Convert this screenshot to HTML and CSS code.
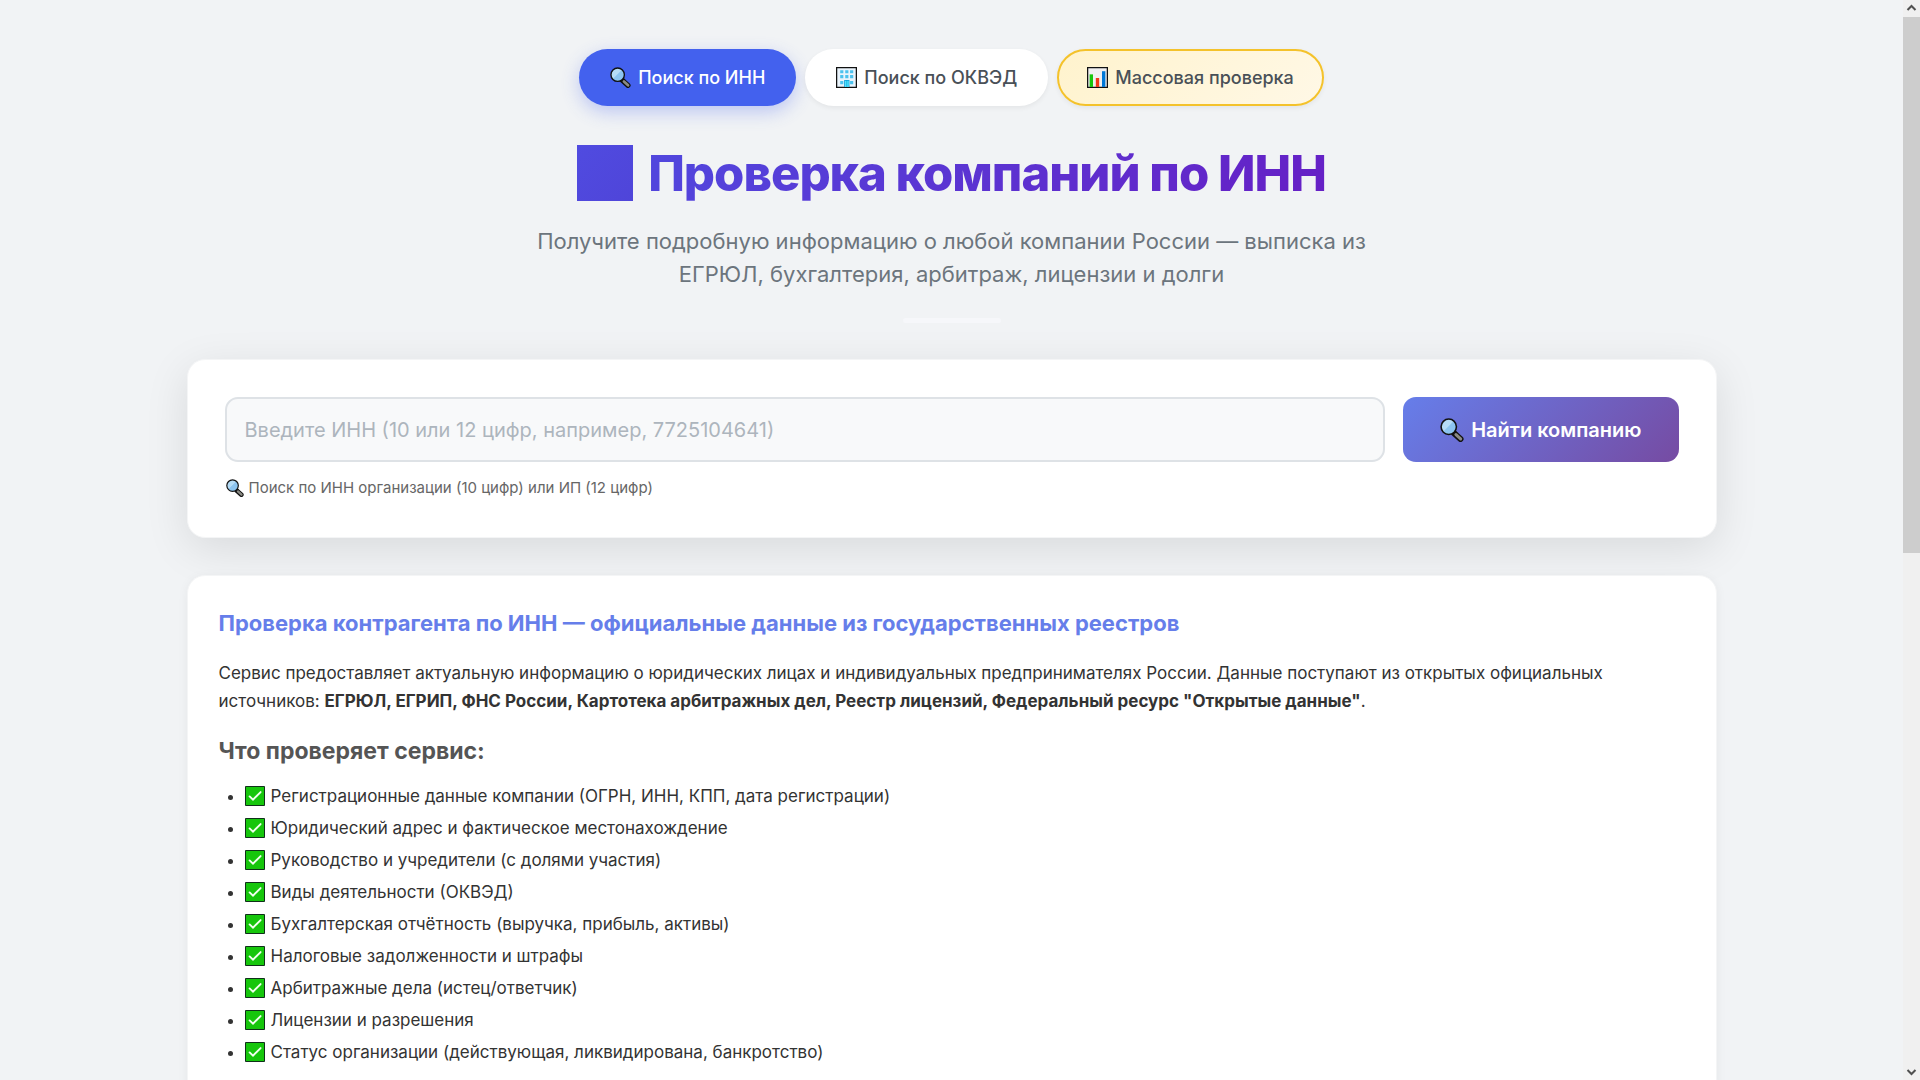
FILE: index.html
```html
<!DOCTYPE html>
<html lang="ru">
  <head>
    <meta charset="UTF-8" />
    <meta name="viewport" content="width=device-width, initial-scale=1" />
    <title>Проверка компаний по ИНН</title>
    <link rel="stylesheet" href="styles.css">
  </head>
  <body>
    <!-- общие иконки -->
    <svg class="sprite" aria-hidden="true">
      <linearGradient id="glass" x1="0" y1="0" x2="1" y2="1">
        <stop offset="0.45" stop-color="#b5dcf7" />
        <stop offset="0.5" stop-color="#8cc4f0" />
      </linearGradient>
      <symbol id="i-search" viewBox="0 0 20 20">
        <path d="M11.5 12.5l5.6 5" stroke="#111" stroke-width="5" stroke-linecap="round" />
        <path d="M11 11l2.6 2.6" stroke="#111" stroke-width="3.4" />
        <path d="M13.3 13.8l3.9 3.6" stroke="#8a8a84" stroke-width="2.6" stroke-linecap="round" />
        <circle cx="7.3" cy="7.3" r="6.4" fill="url(#glass)" stroke="#111" stroke-width="1.3" />
      </symbol>
      <symbol id="i-check" viewBox="0 0 20 20">
        <path d="M.5 .5h19v19H.5z" fill="#16c60c" stroke="#10301a" />
        <path d="M4.6 10.4l3.4 3.3 7.6-7.6" fill="none" stroke="#f2fff0" stroke-width="1.9" stroke-linecap="round" />
      </symbol>
    </svg>

    <div class="window">
      <div class="page">
        <div class="container">
          <!-- вкладки -->
          <nav class="tabs">
            <a class="tab active" href="#"><svg class="icon"><use href="#i-search" /></svg>Поиск по ИНН</a>
            <a class="tab" href="#">
              <svg class="icon" viewBox="0 0 20 20">
                <path d="M.6 .6h18.8v18.8H.6z" fill="#eaf4fc" stroke="#111" stroke-width="1.2" />
                <path d="M4 3h3v3H4zM8.8 3h3v3h-3zM13.4 3h3v3h-3zM4 7.6h3v3H4zM8.8 7.6h3v3h-3zM13.4 7.6h3v3h-3zM4 13.4h3v3H4zM13.4 13.4h3v3h-3z" fill="#4cc2ee" />
                <path d="M7.8 12.4h5V19h-5z" fill="#0d9ad6" />
                <path d="M8.6 13.2H10V19H8.6zM10.7 13.2h1.4V19h-1.4z" fill="#50e6ff" />
              </svg>Поиск по ОКВЭД</a>
            <a class="tab mass" href="#">
              <svg class="icon" viewBox="0 0 20 20">
                <path d="M.6 .6h18.8v18.8H.6z" fill="#f0eff0" stroke="#111" stroke-width="1.2" />
                <path d="M2.5 7h3.2v12H2.5z" fill="#16c60c" />
                <path d="M8.4 10.5h3.2V19H8.4z" fill="#f03a17" />
                <path d="M14.3 4h3.2v15h-3.2z" fill="#0078d7" />
              </svg>Массовая проверка</a>
          </nav>

          <!-- заголовок -->
          <header class="head">
            <h1><span class="block"></span>Проверка компаний по ИНН</h1>
            <p>Получите подробную информацию о любой компании России — выписка из ЕГРЮЛ, бухгалтерия, арбитраж, лицензии и долги</p>
          </header>

          <!-- форма поиска -->
          <form class="card search">
            <div class="row">
              <input type="text" id="inn" aria-label="ИНН" placeholder="Введите ИНН (10 или 12 цифр, например, 7725104641)" />
              <button type="button"><svg class="icon"><use href="#i-search" /></svg>Найти компанию</button>
            </div>
            <label class="hint" for="inn"><svg class="icon"><use href="#i-search" /></svg>Поиск по ИНН организации (10 цифр) или ИП (12 цифр)</label>
          </form>

          <!-- описание сервиса -->
          <section class="card info">
            <h2>Проверка контрагента по ИНН — официальные данные из государственных реестров</h2>
            <p>Сервис предоставляет актуальную информацию о юридических лицах и индивидуальных предпринимателях России. Данные поступают из открытых официальных источников: <strong>ЕГРЮЛ, ЕГРИП, ФНС России, Картотека арбитражных дел, Реестр лицензий, Федеральный ресурс "Открытые данные"</strong>.</p>
            <h3>Что проверяет сервис:</h3>
            <ul>
              <li><svg class="icon"><use href="#i-check" /></svg>Регистрационные данные компании (ОГРН, ИНН, КПП, дата регистрации)</li>
              <li><svg class="icon"><use href="#i-check" /></svg>Юридический адрес и фактическое местонахождение</li>
              <li><svg class="icon"><use href="#i-check" /></svg>Руководство и учредители (с долями участия)</li>
              <li><svg class="icon"><use href="#i-check" /></svg>Виды деятельности (ОКВЭД)</li>
              <li><svg class="icon"><use href="#i-check" /></svg>Бухгалтерская отчётность (выручка, прибыль, активы)</li>
              <li><svg class="icon"><use href="#i-check" /></svg>Налоговые задолженности и штрафы</li>
              <li><svg class="icon"><use href="#i-check" /></svg>Арбитражные дела (истец/ответчик)</li>
              <li><svg class="icon"><use href="#i-check" /></svg>Лицензии и разрешения</li>
              <li><svg class="icon"><use href="#i-check" /></svg>Статус организации (действующая, ликвидирована, банкротство)</li>
            </ul>
          </section>
        </div>
      </div>

      <!-- полоса прокрутки -->
      <div class="scrollbar" aria-hidden="true">
        <svg viewBox="0 0 17 17"><path d="M4.5 10l4-4 4 4" /></svg>
        <div class="track"><div class="thumb"></div></div>
        <svg viewBox="0 0 17 17"><path d="M4.5 7l4 4 4-4" /></svg>
      </div>
    </div>
  </body>
</html>
```
FILE: styles.css
```css
/* сброс */
* {
  box-sizing: border-box;
}
body,
h1,
h2,
h3,
p,
ul {
  margin: 0;
  padding: 0;
}

body {
  font-family: Inter, "Liberation Sans", sans-serif;
  font-size: 17px;
  line-height: 28px;
  color: #333;
  background: #f1f3f5;
}

.sprite {
  position: absolute;
  width: 0;
  height: 0;
}

/* окно: страница + полоса прокрутки */
.window {
  display: flex;
  height: 100vh;
}
.page {
  flex: 1;
  overflow: hidden;
  padding: 49px 24px 0;
}
.container {
  max-width: 1530px;
  margin: 0 auto;
}

.icon {
  width: 20px;
  height: 20px;
  margin-right: 7px;
  flex-shrink: 0;
}

/* вкладки */
.tabs {
  display: flex;
  justify-content: center;
  gap: 9px;
}
.tab {
  display: flex;
  align-items: center;
  height: 57px;
  padding: 0 31px;
  border-radius: 50px;
  background: #fff;
  color: #495057;
  font-size: 18px;
  font-weight: 500;
  text-decoration: none;
  box-shadow: 0 2px 5px rgba(0, 0, 0, 0.06);
}
.tab .icon {
  width: 21px;
  height: 21px;
}
.tab.active {
  background: #4361ee;
  color: #fff;
  box-shadow: 0 6px 18px rgba(67, 97, 238, 0.3);
}
.tab.mass {
  padding: 0 28px;
  border: 2px solid #f4c22b;
  background: linear-gradient(135deg, #fff3cd, #fff8e6);
}

/* заголовок */
.head {
  text-align: center;
  padding-top: 37px;
}
.head h1 {
  font-size: 49px;
  line-height: 62px;
  font-weight: 800;
  letter-spacing: -1px;
  color: transparent;
  background: linear-gradient(135deg, #4361ee, #7209b7);
  -webkit-background-clip: text;
  background-clip: text;
}
.head .block {
  display: inline-block;
  width: 56px;
  height: 56px;
  margin-right: 15px;
  vertical-align: -10px;
  background: linear-gradient(135deg, #504be0, #4f45d9);
}
.head p {
  max-width: 880px;
  margin: 20px auto 0;
  font-size: 22px;
  line-height: 33px;
  color: #6c757d;
}
.head::after {
  content: '';
  display: block;
  width: 98px;
  height: 5px;
  margin: 27px auto 36px;
  border-radius: 3px;
  background: #f6f7fa;
}

/* карточки */
.card {
  border: 1px solid #f4f5f6;
  border-radius: 18px;
  background: #fff;
}

.search {
  padding: 37px 37px 35px;
  box-shadow: 0 11px 44px rgba(0, 0, 0, 0.1);
}
.search .row {
  display: flex;
  gap: 18px;
}
.search input {
  flex: 1;
  min-width: 0;
  height: 65px;
  padding: 0 18px;
  border: 2px solid #dee2e6;
  border-radius: 13px;
  background: #f8f9fa;
  font-family: inherit;
  font-size: 20px;
}
.search input::placeholder {
  color: #adb5bd;
}
.search button {
  display: flex;
  align-items: center;
  height: 65px;
  padding: 0 37px;
  border: 0;
  border-radius: 13px;
  background: linear-gradient(135deg, #667eea, #764ba2);
  color: #fff;
  font-family: inherit;
  font-size: 20px;
  font-weight: 600;
}
.search button .icon {
  width: 24px;
  height: 24px;
}
.hint {
  display: flex;
  align-items: center;
  margin-top: 12px;
  padding-left: 1px;
  font-size: 15px;
  color: #666;
}
.hint .icon {
  width: 18px;
  height: 18px;
  margin-right: 5px;
}

/* описание */
.info {
  margin-top: 37px;
  padding: 33px 31px;
  box-shadow: 0 2px 11px rgba(0, 0, 0, 0.05);
}
.info h2 {
  font-size: 22px;
  font-weight: 700;
  color: #667eea;
}
.info p {
  margin-top: 22px;
}
.info strong {
  font-weight: 700;
}
.info h3 {
  margin: 22px 0 15px;
  font-size: 23px;
  font-weight: 700;
  color: #555;
}
.info ul {
  padding-left: 26px;
}
.info li {
  line-height: 32px;
}
.info li .icon {
  margin-right: 6px;
  vertical-align: -4px;
}

/* полоса прокрутки */
.scrollbar {
  display: flex;
  flex-direction: column;
  width: 17px;
  background: #f0f0f0;
}
.scrollbar svg {
  width: 17px;
  height: 17px;
}
.scrollbar path {
  fill: none;
  stroke: #505050;
  stroke-width: 2;
}
.track {
  flex: 1;
}
.thumb {
  height: calc(51% + 3px);
  background: #cdcdcd;
}
```
